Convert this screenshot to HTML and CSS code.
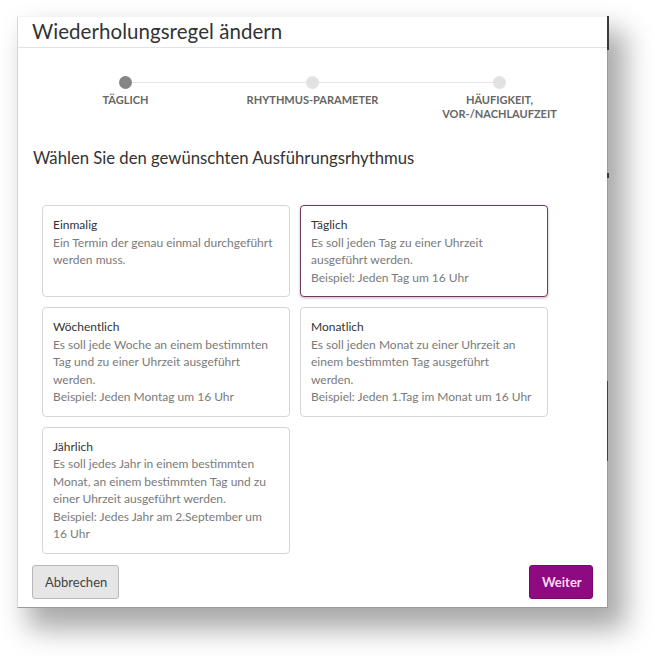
FILE: index.html
```html
<!DOCTYPE html>
<html lang="de">
<head>
<meta charset="utf-8">
<title>Wiederholungsregel ändern</title>
<link rel="stylesheet" href="styles.css">
</head>
<body>
<div class="dialog">
  <span class="edge edge-top"></span>
  <span class="edge edge-mid"></span>
  <span class="edge edge-low"></span>
  <div class="dialog-header">
    <h1 class="dialog-title">Wiederholungsregel ändern</h1>
  </div>
  <div class="dialog-body">
    <ol class="stepper">
      <li class="step step-active"><span class="dot"></span><span class="step-label">TÄGLICH</span></li>
      <li class="step"><span class="dot"></span><span class="step-label">RHYTHMUS-PARAMETER</span></li>
      <li class="step step-last"><span class="dot"></span><span class="step-label">HÄUFIGKEIT,<br>VOR-/NACHLAUFZEIT</span></li>
    </ol>
    <h2 class="section-title">Wählen Sie den gewünschten Ausführungsrhythmus</h2>
    <div class="options">
      <div class="option">
        <div class="option-title">Einmalig</div>
        <div class="option-text">Ein Termin der genau einmal durchgeführt werden muss.</div>
      </div>
      <div class="option option-selected">
        <div class="option-title">Täglich</div>
        <div class="option-text">Es soll jeden Tag zu einer Uhrzeit ausgeführt werden.<br>Beispiel: Jeden Tag um 16 Uhr</div>
      </div>
      <div class="option">
        <div class="option-title">Wöchentlich</div>
        <div class="option-text">Es soll jede Woche an einem bestimmten Tag und zu einer Uhrzeit ausgeführt werden.<br>Beispiel: Jeden Montag um 16 Uhr</div>
      </div>
      <div class="option">
        <div class="option-title">Monatlich</div>
        <div class="option-text">Es soll jeden Monat zu einer Uhrzeit an einem bestimmten Tag ausgeführt werden.<br>Beispiel: Jeden 1.Tag im Monat um 16 Uhr</div>
      </div>
      <div class="option">
        <div class="option-title">Jährlich</div>
        <div class="option-text">Es soll jedes Jahr in einem bestimmten Monat, an einem bestimmten Tag und zu einer Uhrzeit ausgeführt werden.<br>Beispiel: Jedes Jahr am 2.September um 16 Uhr</div>
      </div>
    </div>
  </div>
  <div class="dialog-footer">
    <button class="btn btn-secondary">Abbrechen</button>
    <button class="btn btn-primary">Weiter</button>
  </div>
</div>
</body>
</html>
```
FILE: styles.css
```css
* { box-sizing: border-box; }
html, body { margin: 0; padding: 0; background: #ffffff; }
body {
  font-family: Lato, "Open Sans", "Liberation Sans", sans-serif;
  color: #333;
  padding: 16px 0 0 17px;
  min-height: 656px;
}
.dialog {
  position: relative;
  width: 591px;
  height: 592px;
  background: #fff;
  border: 1px solid #d8d8d8;
  border-top-color: #f4f4f4;
  border-right-color: #9a9a9a;
  border-bottom-color: #9a9a9a;
  box-shadow: 14px 18px 26px 3px rgba(0, 0, 0, 0.34);
  display: flex;
  flex-direction: column;
}
.edge {
  position: absolute;
  right: -2px;
  width: 2px;
  background: #3a3a3a;
}
.edge-top { top: -1px; height: 34px; }
.edge-mid { top: 156px; height: 5px; }
.edge-low { top: 364px; height: 80px; background: #2f4a4a; width: 1px; right: -1px; }
.dialog-header {
  height: 31px;
  border-bottom: 1px solid #e2e2e2;
  padding: 0 14px 2px;
  display: flex;
  align-items: center;
}
.dialog-title {
  margin: 0;
  font-weight: 400;
  font-size: 20.5px;
  color: #333;
  letter-spacing: 0.05px;
}
.dialog-body {
  flex: 1;
  padding: 0 14px;
}
.stepper {
  list-style: none;
  margin: 28px 0 0;
  padding: 0;
  display: grid;
  grid-template-columns: repeat(3, 1fr);
}
.step {
  position: relative;
  display: flex;
  flex-direction: column;
  align-items: center;
}
.step::after {
  content: "";
  position: absolute;
  top: 6px;
  left: 50%;
  width: 100%;
  height: 1px;
  background: #e6e6e6;
}
.step-last::after { display: none; }
.dot {
  position: relative;
  z-index: 1;
  width: 13px;
  height: 13px;
  border-radius: 50%;
  background: #e2e2e2;
}
.step-active .dot { background: #858585; }
.step-label {
  margin-top: 4px;
  font-size: 11px;
  font-weight: 700;
  line-height: 14px;
  color: #666;
  text-align: center;
}
.section-title {
  margin: 26px 0 0 1px;
  font-size: 16.7px;
  font-weight: 400;
  color: #333;
  line-height: 22px;
}
.options {
  margin: 36px 0 0 10px;
  display: grid;
  grid-template-columns: 248px 248px;
  gap: 10px;
}
.option {
  border: 1px solid #d6d6d6;
  border-radius: 4px;
  padding: 10px 14.5px 10px 10px;
  font-size: 12px;
  line-height: 17.5px;
  background: #fff;
}
.option-selected {
  border-color: #6e3b62;
  box-shadow: 0 1px 3px rgba(110, 30, 95, 0.35);
}
.option-title { color: #333; }
.option-text { color: #7a7a7a; }
.dialog-footer {
  display: flex;
  justify-content: space-between;
  padding: 0 14px 8px;
}
.btn {
  height: 34px;
  border-radius: 3px;
  font-family: inherit;
  font-size: 13px;
  padding: 0 12px;
  cursor: pointer;
}
.btn-secondary {
  width: 87px;
  background: #e6e6e6;
  border: 1px solid #b8b8b8;
  color: #444;
}
.btn-primary {
  width: 64px;
  background: #8e0a80;
  border: 1px solid #7a066e;
  color: #f7dcf3;
  font-weight: 700;
}
```
